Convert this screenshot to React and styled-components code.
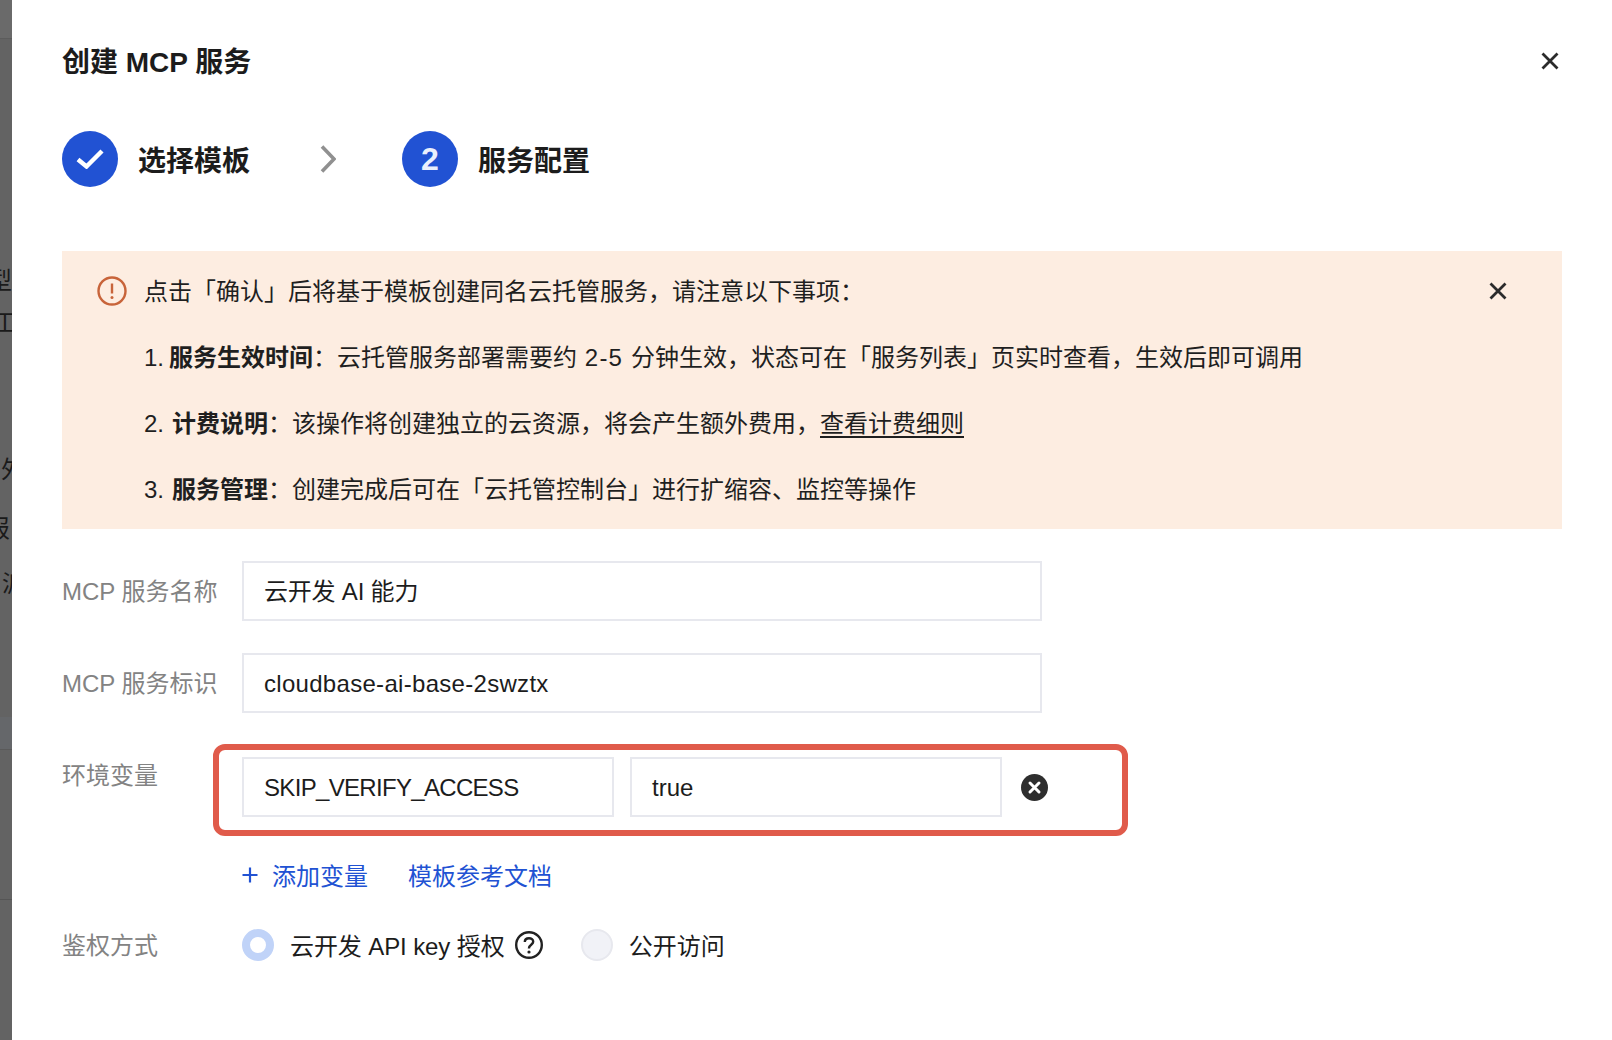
import React from "react";
import styled, { createGlobalStyle } from "styled-components";

const GlobalStyle = createGlobalStyle`
  html, body {
    margin: 0;
    padding: 0;
    background: #fff;
  }
  body {
    font-family: "Liberation Sans", "Noto Sans CJK SC", sans-serif;
    color: #1c1c1c;
  }
  * {
    box-sizing: border-box;
  }
`;

const Page = styled.div`
  display: flex;
  width: 1612px;
  height: 1040px;
  overflow: hidden;
`;

const Backdrop = styled.div`
  display: flex;
  flex-direction: column;
  flex: 0 0 12px;
  background: #636363;
  overflow: hidden;
`;

const BackdropHead = styled.div`
  flex: none;
  height: 39px;
  background: #6a6a6a;
  border-bottom: 1px solid #5c5c5c;
`;

const BackdropChar = styled.div`
  flex: none;
  width: 24px;
  height: 26px;
  line-height: 26px;
  font-size: 24px;
  color: #1a1a1a;
  margin-top: ${(props) => props.top}px;
  margin-left: ${(props) => props.left}px;
`;

const BackdropBand = styled.div`
  flex: none;
  height: 33px;
  margin-top: 120px;
  background: #65676a;
  border-bottom: 1px solid #5a5a5a;
`;

const BackdropLine = styled.div`
  flex: none;
  height: 1px;
  margin-top: 149px;
  background: #555;
`;

const Drawer = styled.div`
  flex: 1;
  display: flex;
  flex-direction: column;
  padding: 0 50px;
  background: #fff;
`;

const Header = styled.div`
  display: flex;
  align-items: center;
  justify-content: space-between;
  height: 122px;
`;

const Title = styled.h2`
  margin: 0 0 2px;
  font-size: 28px;
  font-weight: 700;
  color: #1c1c1c;
`;

const IconButton = styled.button`
  display: flex;
  padding: 0;
  border: 0;
  background: none;
  color: #2b2b2b;
  margin-right: ${(props) => props.right || 0}px;
`;

const Steps = styled.div`
  display: flex;
  align-items: center;
  height: 56px;
  margin-top: 9px;
  margin-bottom: 64px;
`;

const StepCircle = styled.div`
  display: flex;
  align-items: center;
  justify-content: center;
  width: 56px;
  height: 56px;
  border-radius: 50%;
  background: #2152d3;
  color: #e9effd;
  font-size: 32px;
  font-weight: 700;
`;

const StepLabel = styled.span`
  margin-left: 20px;
  font-size: 28px;
  font-weight: 700;
  color: #1c1c1c;
`;

const StepArrow = styled.span`
  display: flex;
  margin: 0 66px 0 70px;
`;

const Notice = styled.div`
  position: relative;
  height: 278px;
  padding: 21px 50px 0 82px;
  background: #fdede1;
  margin-bottom: 32px;
`;

const NoticeIcon = styled.span`
  position: absolute;
  left: 35px;
  top: 25px;
  display: flex;
`;

const NoticeClose = styled.span`
  position: absolute;
  right: 55px;
  top: 31px;
  display: flex;
  color: #2b2b2b;
`;

const NoticeLine = styled.p`
  margin: 0 0 26px;
  font-size: 24px;
  line-height: 40px;
  color: #1f1f1f;
  white-space: nowrap;

  b {
    font-weight: 700;
  }
  a {
    color: inherit;
    text-decoration: underline;
    text-underline-offset: 4px;
  }
`;

const ItemNumber = styled.span`
  display: inline-block;
  width: ${(props) => props.width}px;
`;

const Metric = styled.span`
  letter-spacing: 1.2px;
`;

const FieldRow = styled.div`
  display: grid;
  grid-template-columns: 180px 1fr;
  margin-bottom: ${(props) => props.gap || 0}px;
`;

const FieldLabel = styled.label`
  font-size: 24px;
  line-height: 40px;
  color: #838383;
  padding-top: ${(props) => props.offset || 0}px;
  white-space: nowrap;
`;

const TextBox = styled.div`
  display: flex;
  align-items: center;
  flex: none;
  width: ${(props) => props.width}px;
  height: 60px;
  padding: 2px 20px 0;
  border: 2px solid #e7e8ee;
  background: #fff;
  font-size: 24px;
  line-height: 40px;
  letter-spacing: ${(props) => props.spacing || 0}px;
  color: #1c1c1c;
  white-space: nowrap;
`;

const Highlight = styled.div`
  display: flex;
  align-items: flex-start;
  width: 915px;
  height: 92px;
  margin-left: -29px;
  padding: 7px 23px 0;
  border: 6px solid #e05b4b;
  border-radius: 12px;
`;

const PairGap = styled.div`
  display: flex;
  align-items: center;
  gap: 16px;
`;

const RemoveIcon = styled.span`
  display: flex;
  margin-left: 3px;
`;

const Links = styled.div`
  display: flex;
  align-items: center;
  height: 40px;
  font-size: 24px;
  line-height: 40px;
  color: #2152d3;
`;

const AddLink = styled.a`
  display: flex;
  align-items: center;
  gap: 14px;
  margin-right: 40px;
`;

const RadioGroup = styled.div`
  display: flex;
  align-items: center;
  height: 40px;
  font-size: 24px;
  line-height: 40px;
  color: #1c1c1c;
`;

const RowText = styled.span`
  padding-top: 3px;
  white-space: nowrap;
  letter-spacing: ${(props) => props.spacing || 0}px;
`;

const Radio = styled.span`
  flex: none;
  width: 32px;
  height: 32px;
  border-radius: 50%;
  margin-right: 16px;
  background: ${(props) => (props.checked ? "#fff" : "#f1f2f7")};
  border: ${(props) =>
    props.checked ? "8px solid #c0d3f8" : "2px solid #e7e8ee"};
`;

const HelpIcon = styled.span`
  display: flex;
  margin-left: 10px;
  margin-right: 38px;
`;

const CloseGlyph = () => (
  <svg width="18" height="18" viewBox="0 0 18 18" fill="none">
    <path
      d="M1.5 1.5L16.5 16.5M16.5 1.5L1.5 16.5"
      stroke="currentColor"
      strokeWidth="2.8"
    />
  </svg>
);

const Chevron = () => (
  <svg width="16" height="28" viewBox="0 0 16 28" fill="none">
    <path d="M2 1.5L14 14L2 26.5" stroke="#909090" strokeWidth="3.6" />
  </svg>
);

const CheckGlyph = () => (
  <svg width="28" height="20" viewBox="0 0 28 20" fill="none">
    <path d="M2 10.5L10.5 17.5L26 2" stroke="#fff" strokeWidth="4.4" />
  </svg>
);

const WarnGlyph = () => (
  <svg width="30" height="30" viewBox="0 0 30 30" fill="none">
    <circle cx="15" cy="15" r="13.5" stroke="#c8643a" strokeWidth="2.4" />
    <path d="M15 7.5V17.5" stroke="#c8643a" strokeWidth="2.4" />
    <circle cx="15" cy="21.5" r="1.5" fill="#c8643a" />
  </svg>
);

const RemoveGlyph = () => (
  <svg width="27" height="27" viewBox="0 0 27 27" fill="none">
    <circle cx="13.5" cy="13.5" r="13.5" fill="#2e2e2e" />
    <path
      d="M9 9L18 18M18 9L9 18"
      stroke="#fff"
      strokeWidth="3"
      strokeLinecap="round"
    />
  </svg>
);

const PlusGlyph = () => (
  <svg width="16" height="16" viewBox="0 0 16 16" fill="none">
    <path d="M8 0.5V15.5M0.5 8H15.5" stroke="#2152d3" strokeWidth="2.2" />
  </svg>
);

const HelpGlyph = () => (
  <svg width="28" height="28" viewBox="0 0 28 28" fill="none">
    <circle cx="14" cy="14" r="12.8" stroke="#222" strokeWidth="2.4" />
    <path
      d="M9.8 11C9.8 8.6 11.6 7.2 14 7.2C16.4 7.2 18.2 8.7 18.2 10.8C18.2 13.6 14 13.8 14 17V17.6"
      stroke="#222"
      strokeWidth="2.4"
    />
    <circle cx="14" cy="21" r="1.6" fill="#222" />
  </svg>
);

const App = () => {
  return (
    <>
      <GlobalStyle />
      <Page>
        <Backdrop>
          <BackdropHead />
          <BackdropChar top={229} left={-12}>型</BackdropChar>
          <BackdropChar top={16} left={-7}>工</BackdropChar>
          <BackdropChar top={121} left={1}>外</BackdropChar>
          <BackdropChar top={33} left={-14}>报</BackdropChar>
          <BackdropChar top={29} left={2}>派</BackdropChar>
          <BackdropBand />
          <BackdropLine />
        </Backdrop>
        <Drawer>
          <Header>
            <Title>创建 MCP 服务</Title>
            <IconButton right={3}>
              <CloseGlyph />
            </IconButton>
          </Header>
          <Steps>
            <StepCircle>
              <CheckGlyph />
            </StepCircle>
            <StepLabel>选择模板</StepLabel>
            <StepArrow>
              <Chevron />
            </StepArrow>
            <StepCircle>2</StepCircle>
            <StepLabel>服务配置</StepLabel>
          </Steps>
          <Notice>
            <NoticeIcon>
              <WarnGlyph />
            </NoticeIcon>
            <NoticeClose>
              <CloseGlyph />
            </NoticeClose>
            <NoticeLine>点击「确认」后将基于模板创建同名云托管服务，请注意以下事项：</NoticeLine>
            <NoticeLine>
              <ItemNumber width={25}>1.</ItemNumber>
              <b>服务生效时间</b>：云托管服务部署需要约<Metric> 2-5 </Metric>分钟生效，状态可在「服务列表」页实时查看，生效后即可调用
            </NoticeLine>
            <NoticeLine>
              <ItemNumber width={28}>2.</ItemNumber>
              <b>计费说明</b>：该操作将创建独立的云资源，将会产生额外费用，<a>查看计费细则</a>
            </NoticeLine>
            <NoticeLine>
              <ItemNumber width={28}>3.</ItemNumber>
              <b>服务管理</b>：创建完成后可在「云托管控制台」进行扩缩容、监控等操作
            </NoticeLine>
          </Notice>
          <FieldRow gap={32}>
            <FieldLabel offset={11}>MCP 服务名称</FieldLabel>
            <TextBox width={800} spacing={-0.2}>云开发 AI 能力</TextBox>
          </FieldRow>
          <FieldRow gap={31}>
            <FieldLabel offset={11}>MCP 服务标识</FieldLabel>
            <TextBox width={800} spacing={0.3}>cloudbase-ai-base-2swztx</TextBox>
          </FieldRow>
          <FieldRow gap={19}>
            <FieldLabel offset={12}>环境变量</FieldLabel>
            <Highlight>
              <PairGap>
                <TextBox width={372} spacing={-0.68}>SKIP_VERIFY_ACCESS</TextBox>
                <TextBox width={372}>true</TextBox>
                <RemoveIcon>
                  <RemoveGlyph />
                </RemoveIcon>
              </PairGap>
            </Highlight>
          </FieldRow>
          <FieldRow gap={30}>
            <span />
            <Links>
              <AddLink>
                <PlusGlyph />
                <RowText>添加变量</RowText>
              </AddLink>
              <RowText>模板参考文档</RowText>
            </Links>
          </FieldRow>
          <FieldRow>
            <FieldLabel offset={1}>鉴权方式</FieldLabel>
            <RadioGroup>
              <Radio checked />
              <RowText spacing={-0.1}>云开发 API key 授权</RowText>
              <HelpIcon>
                <HelpGlyph />
              </HelpIcon>
              <Radio />
              <RowText>公开访问</RowText>
            </RadioGroup>
          </FieldRow>
        </Drawer>
      </Page>
    </>
  );
};

export default App;
